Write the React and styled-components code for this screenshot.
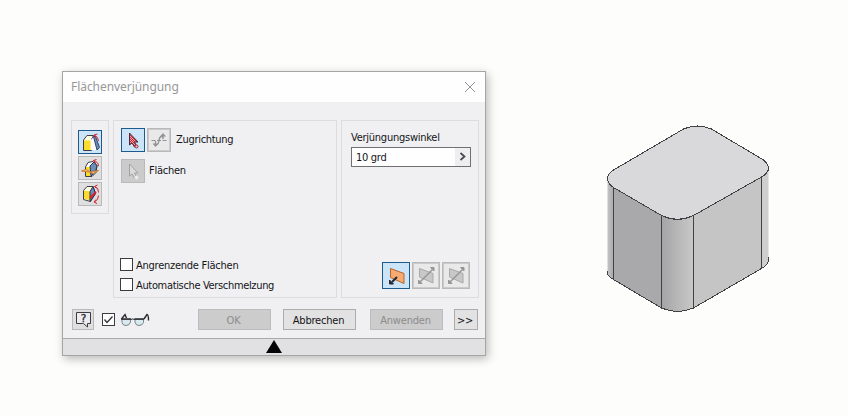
import React from 'react';
import styled, { createGlobalStyle } from 'styled-components';

const GlobalStyle = createGlobalStyle`
  * {
    box-sizing: border-box;
  }
  body {
    margin: 0;
    background: #fdfdfc;
    color: #141418;
    font-family: 'DejaVu Sans Condensed', 'DejaVu Sans', sans-serif;
    font-size: 11px;
  }
  svg {
    display: block;
    flex: none;
  }
`;

const Viewport = styled.main`
  display: flex;
  align-items: flex-start;
  gap: 120px;
  width: 848px;
  height: 416px;
  padding: 71px 0 0 62px;
  overflow: hidden;
`;

const Dialog = styled.section`
  display: flex;
  flex-direction: column;
  flex: none;
  width: 424px;
  height: 285px;
  background: #f0f0f2;
  border: 1px solid #a5a5a6;
  box-shadow: 2px 3px 9px rgba(0, 0, 0, 0.27);
`;

const TitleBar = styled.header`
  display: flex;
  align-items: center;
  justify-content: space-between;
  height: 30px;
  padding: 0 9px 0 8px;
  background: #fefefe;
`;

const Title = styled.h1`
  margin: 0;
  color: #98989a;
  font: 400 12px/18px 'Noto Sans', sans-serif;
  letter-spacing: -0.06px;
`;

const Groups = styled.div`
  display: flex;
  align-items: flex-start;
  gap: 4px;
  height: 196px;
  padding: 18px 6px 0 8px;
`;

const Group = styled.div`
  display: flex;
  flex-direction: column;
  width: ${(props) => props.$width}px;
  height: ${(props) => props.$height}px;
  padding: ${(props) => props.$padding};
  gap: ${(props) => props.$gap || 0}px;
  border: 1px solid #dcdcdd;
`;

const Row = styled.div`
  display: flex;
  align-items: center;
  gap: ${(props) => props.$gap}px;
  margin-bottom: ${(props) => props.$below || 0}px;
`;

const Options = styled.div`
  display: flex;
  flex-direction: column;
  gap: 6px;
  margin: auto 0 0 -1px;
`;

const buttonFill = (props) => {
  if (props.$active) return '#cce4f7';
  if (props.$muted) return '#cbcbcb';
  return props.$framed ? '#e9e9ea' : '#dfdfe0';
};

const IconButton = styled.button`
  display: flex;
  flex: none;
  align-items: center;
  justify-content: center;
  width: ${(props) => props.$width || 24}px;
  height: ${(props) => props.$height || 24}px;
  padding: 0;
  background: ${buttonFill};
  border: 1px solid ${(props) => (props.$active ? '#1d5a8e' : '#b9b9b9')};
  box-shadow: ${(props) => (props.$framed ? 'inset 0 0 0 1px #cbcbcb' : 'none')};
`;

const Label = styled.span`
  margin-left: ${(props) => props.$indent || 0}px;
  line-height: 14px;
  white-space: nowrap;
  letter-spacing: ${(props) => props.$spacing || '-0.25px'};
`;

const OptionLabel = styled(Label)`
  padding-top: 1px;
  line-height: 13px;
`;

const Checkbox = styled.span`
  display: flex;
  align-items: center;
  justify-content: center;
  flex: none;
  width: 13px;
  height: 13px;
  background: #fefefe;
  border: 1px solid #3c3c3e;
`;

const Field = styled.div`
  display: flex;
  align-items: stretch;
  justify-content: space-between;
  width: 120px;
  height: 20px;
  margin-top: 2px;
  padding-left: 4px;
  line-height: 19px;
  background: #fefefe;
  border: 1px solid #707073;
  letter-spacing: -0.3px;
`;

const FieldArrow = styled.span`
  display: flex;
  align-items: center;
  justify-content: center;
  width: 15px;
  background: #eeeef0;
`;

const Modes = styled.div`
  display: flex;
  gap: 2px;
  margin: auto 0 0 31px;
`;

const Actions = styled.div`
  display: flex;
  align-items: center;
  height: 41px;
  padding: 4px 7px 0 9px;
`;

const Preview = styled.div`
  display: flex;
  align-items: center;
  gap: 5px;
  width: 96px;
  margin: 0 0 0 8px;
`;

const PushButton = styled.button`
  width: ${(props) => props.$width || 73}px;
  height: 21px;
  margin-left: ${(props) => props.$before}px;
  padding: 1px 2px 0 0;
  color: ${(props) => (props.disabled ? '#8b8b8e' : '#141418')};
  background: ${(props) => (props.disabled ? '#cccccc' : '#e2e2e3')};
  border: 1px solid ${(props) => (props.disabled ? '#bcbcbc' : '#acacac')};
  font: inherit;
  letter-spacing: -0.2px;
`;

const Footer = styled.footer`
  height: 17px;
  padding-left: 203px;
  background: #e1e1e3;
  border-top: 1px solid #a9a9aa;
`;

const CloseIcon = () => (
  <svg width="12" height="12" stroke="#8f9298" fill="none">
    <path d="M1 1l10 10M11 1L1 11" />
  </svg>
);

const EdgeTaperIcon = () => (
  <svg width="22" height="22" fill="none">
    <path d="M4.500 9L8 4.500h6.500l-2 4V19.500h-8z" fill="#fffce0" stroke="#3a3f48" />
    <path d="M5 9.500h6.500V19H5z" fill="#fbdc2c" />
    <path d="M12 9l2.500-3 3.500 13h-6z" fill="#fdfdfd" />
    <path d="M14.500 5.500h2l4 11-2.500 2.500z" fill="#6c8db8" stroke="#33456b" />
    <path d="M19.500 10q0-4-4-6M18.500 3l-3.500 1 2 3" stroke="#d8202e" />
  </svg>
);

const PlaneTaperIcon = () => (
  <svg width="22" height="22" fill="none">
    <path d="M6.500 10L9 5.500l5-1 4 4-1 7-4 4H6.500z" fill="#fdfdfd" stroke="#3a3f48" />
    <path d="M7 10h4v9H7z" fill="#fbdc2c" />
    <path d="M11 9l4-4 3 4-1.500 6-4.500 4z" fill="#6c8db8" stroke="#26334c" />
    <path d="M2.500 14L7 12.500l5 2.500 7.500-1.500-5 3-4.500-1.500z" fill="#f5c79a" stroke="#cf7d2c" />
    <path d="M19.500 9q0-4-5-5.500M17.500 2.500l-3 1 2 2.500" stroke="#d8202e" />
  </svg>
);

const LineTaperIcon = () => (
  <svg width="22" height="22" fill="none">
    <path d="M4.500 7.500L8 3.500h6l2.500 7-5 8-7-2z" fill="#fffce0" stroke="#3a3f48" />
    <path d="M5 7.500l6 1v9l-6-2z" fill="#fbdc2c" />
    <path d="M11 8.500l3-5 2.500 7-5.500 8z" fill="#6c8db8" stroke="#26334c" />
    <path d="M11 15l6-6" stroke="#d8202e" strokeWidth="2" />
    <path
      d="M16 3.500q3.500 1 3.500 6M18.500 2l-3 1.500 2 2M19.500 12.500q0 4.500-4 6.500M17 16.500L15 19l3 1.500"
      stroke="#d8202e"
    />
  </svg>
);

const PickIcon = ({ muted }) => (
  <svg width="22" height="22">
    <defs>
      <pattern id="pick-hatch" width="2" height="2" patternUnits="userSpaceOnUse">
        <path d="M0 0h2v2H0z" fill="#f0a3ab" />
        <path d="M0 0h1v1H0zM1 1h1v1H1z" fill="#cf2636" />
      </pattern>
    </defs>
    <path
      d="M7.500 4v12l2.500-2 2.500 4 2-1-2-4h3.500z"
      fill={muted ? '#dadada' : 'url(#pick-hatch)'}
      stroke={muted ? '#a2a2a2' : '#4a2a3a'}
    />
    <circle
      cx="14.500"
      cy="17.500"
      r="1.500"
      fill={muted ? '#eeeeee' : '#f5c8cb'}
      stroke={muted ? '#ececec' : '#9c2435'}
    />
  </svg>
);

const FlipIcon = () => (
  <svg width="22" height="22" fill="none" stroke="#929294">
    <path d="M3.500 11.500h15" strokeDasharray="4 1.500" />
    <path d="M7.500 12v4q3 0 3.500-4.500.5-4.500 4-4.500" strokeWidth="1.300" />
    <path d="M12 7.500L15 4l3 3.500zM4.500 14.500l3 3.500 3-3.500z" fill="#929294" stroke="none" />
    <path d="M15 7v3" strokeWidth="1.500" />
  </svg>
);

const FaceIcon = ({ active }) => (
  <svg width="26" height="25">
    <path
      d={active ? 'M7.500 5.500l13.500 5v10l-13.500-6z' : 'M6.500 5.500l13.500 5v9.500l-13.500-6z'}
      fill={active ? '#f6ab72' : '#c8c8c8'}
      stroke={active ? '#b6622b' : '#a8a8a8'}
    />
    {active ? (
      <g fill="#25282e" stroke="#25282e">
        <path d="M14 14l-5 5" strokeWidth="2" />
        <path d="M6.500 17v4h4z" />
      </g>
    ) : (
      <g fill="#969696" stroke="#969696">
        <path d="M7 19L20 6" strokeWidth="1.500" />
        <path d="M5.500 17v3.500H9zM17.500 4.500H21V8z" />
      </g>
    )}
  </svg>
);

const HelpIcon = () => (
  <svg width="20" height="19">
    <path d="M3.500 2.500h14v11h-3v3.500l-4-3.500h-7z" fill="#ececf0" stroke="#3c3c40" />
    <text
      x="10.500"
      y="12"
      textAnchor="middle"
      fill="#25252a"
      fontFamily="DejaVu Sans"
      fontSize="10.500"
      stroke="#25252a"
      strokeWidth="0.300"
    >
      ?
    </text>
  </svg>
);

const TickIcon = () => (
  <svg width="11" height="11" fill="none" stroke="#333336" strokeWidth="1.300">
    <path d="M1.500 5.500L4 8.500l5.500-6" />
  </svg>
);

const GlassesIcon = () => (
  <svg width="30" height="16" fill="none" stroke="#27292c">
    <path
      d="M2 7.500v3q.5 3 4 3t4.500-3.500V7.500zM15 7.500V10q.5 3.500 4 3.500t4.500-3v-3z"
      fill="#d9eaef"
      stroke="#75858b"
    />
    <path d="M1 7h10M14.500 7h9.500" strokeWidth="1.500" />
    <path d="M10.500 7.500q2-1 4.500 0" />
    <path d="M1.500 7L5 2.500 6.500 6M24 7l3-4.500q1.500 0 1.500 6" strokeWidth="1.400" />
  </svg>
);

const Solid = styled.svg`
  margin-top: 49px;
`;

// filleted block in isometric view, sides first and the top face over them
const Model = () => (
  <Solid width="170" height="200" fill="none">
    <defs>
      <linearGradient id="fillet-left">
        <stop offset="0" stopColor="#c3c3c5" />
        <stop offset="1" stopColor="#aaaaac" />
      </linearGradient>
      <linearGradient id="fillet-front">
        <stop offset="0" stopColor="#a4a4a7" />
        <stop offset="0.450" stopColor="#b5b5b6" />
        <stop offset="1" stopColor="#c8c8c9" />
      </linearGradient>
    </defs>
    <path d="M1.500 57V153q1 4 6 7V65z" fill="url(#fillet-left)" />
    <path d="M7.500 65l48 28v95l-48-28z" fill="#a9a9ab" />
    <path d="M55.500 90v98q16 7 32 0V90z" fill="url(#fillet-front)" />
    <path d="M87.500 93l68-40v95l-68 40z" fill="#c5c5c5" />
    <path d="M155.500 50v98q7-4 7-9V46z" fill="#cececf" />
    <g stroke="#414143" shapeRendering="crispEdges">
      <path
        d="M7.500 50L77.500 9q14-6 28 0l52 31q5 4 5 8 0 5-7 9l-68 38.500q-16 7.500-32 0l-48-28q-6-4-6-9.500 0-4 6-8z"
        fill="#d9d9dc"
      />
      <path d="M7.500 67v92M55.500 95.500v92.500M87.500 95.500V188M155.500 57v92" />
      <path d="M1.500 151v3q1 3 6 5.500l48 28.500q16 7 32 0l68-39.500q7-4 7-9v-3" />
    </g>
  </Solid>
);

const App = () => (
  <>
    <GlobalStyle />
    <Viewport>
      <Dialog>
        <TitleBar>
          <Title>Flächenverjüngung</Title>
          <CloseIcon />
        </TitleBar>
        <Groups>
          <Group $width={38} $height={94} $padding="9px 6px" $gap={2}>
            <IconButton $active>
              <EdgeTaperIcon />
            </IconButton>
            <IconButton>
              <PlaneTaperIcon />
            </IconButton>
            <IconButton>
              <LineTaperIcon />
            </IconButton>
          </Group>
          <Group $width={224} $height={178} $padding="7px 7px 5px">
            <Row $gap={2} $below={7}>
              <IconButton $active>
                <PickIcon />
              </IconButton>
              <IconButton $framed>
                <FlipIcon />
              </IconButton>
              <Label $indent={3} $spacing="-0.3px">
                Zugrichtung
              </Label>
            </Row>
            <Row $gap={4}>
              <IconButton $muted>
                <PickIcon muted />
              </IconButton>
              <Label>Flächen</Label>
            </Row>
            <Options>
              <Row $gap={3}>
                <Checkbox />
                <OptionLabel>Angrenzende Flächen</OptionLabel>
              </Row>
              <Row $gap={3}>
                <Checkbox />
                <OptionLabel $spacing="-0.34px">Automatische Verschmelzung</OptionLabel>
              </Row>
            </Options>
          </Group>
          <Group $width={138} $height={178} $padding="10px 8px 8px 9px">
            <Label>Verjüngungswinkel</Label>
            <Field>
              10 grd
              <FieldArrow>
                <svg width="8" height="9" fill="none" stroke="#48484b" strokeWidth="1.700">
                  <path d="M1.500 1l4 3.500-4 3.500" />
                </svg>
              </FieldArrow>
            </Field>
            <Modes>
              <IconButton $active $width={28} $height={27}>
                <FaceIcon active />
              </IconButton>
              <IconButton $framed $width={28} $height={27}>
                <FaceIcon />
              </IconButton>
              <IconButton $framed $width={28} $height={27}>
                <FaceIcon />
              </IconButton>
            </Modes>
          </Group>
        </Groups>
        <Actions>
          <IconButton $width={22} $height={21}>
            <HelpIcon />
          </IconButton>
          <Preview>
            <Checkbox>
              <TickIcon />
            </Checkbox>
            <GlassesIcon />
          </Preview>
          <PushButton disabled $before={0}>
            OK
          </PushButton>
          <PushButton $before={12}>Abbrechen</PushButton>
          <PushButton disabled $before={14}>
            Anwenden
          </PushButton>
          <PushButton $before={11} $width={24}>
            &gt;&gt;
          </PushButton>
        </Actions>
        <Footer>
          <svg width="16" height="15">
            <path d="M8 1l8 13H0z" fill="#050507" />
          </svg>
        </Footer>
      </Dialog>
      <Model />
    </Viewport>
  </>
);

export default App;
